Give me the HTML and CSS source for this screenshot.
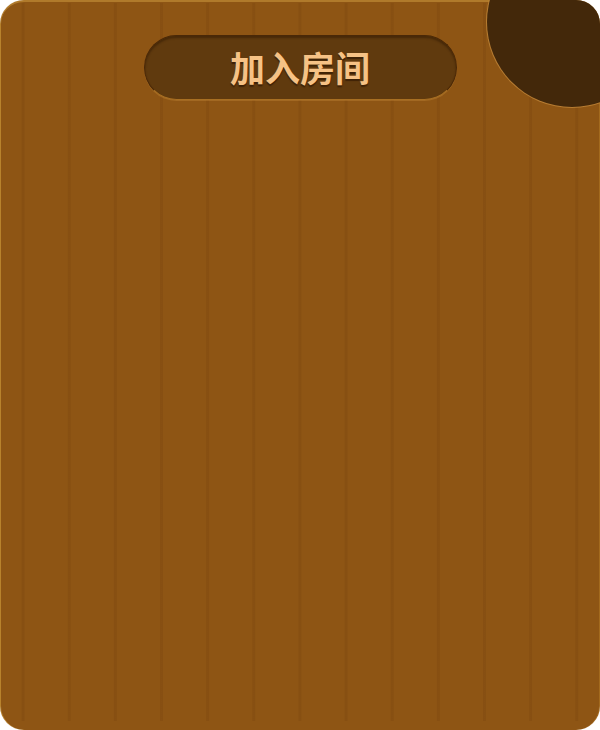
FILE: index.html
```html
<!DOCTYPE html>
<html lang="zh">
<head>
<meta charset="utf-8">
<title>加入房间</title>
<link rel="stylesheet" href="styles.css">
</head>
<body>
<div class="card">
  <div class="corner"></div>
  <div class="title-pill"><span class="title-text">加入房间</span></div>
</div>
</body>
</html>
```
FILE: styles.css
```css
html, body {
  margin: 0;
  padding: 0;
  background: #ffffff;
}
.card {
  position: relative;
  box-sizing: border-box;
  width: 600px;
  height: 730px;
  border-radius: 24px;
  overflow: hidden;
  background-color: #8e5514;
  background-image: linear-gradient(to right,
      transparent calc(50% - 1px),
      rgba(110, 60, 10, 0.22) calc(50% - 1px),
      rgba(110, 60, 10, 0.22) calc(50% + 1px),
      transparent calc(50% + 1px));
  background-size: calc(100% / 13) 718px;
  background-position: 0 3px;
  background-repeat: repeat-x;
  box-shadow: inset 0 2px 0 #b07a2b, inset 1px 0 0 #b8822c, inset -1px 0 0 #a36a1e;
  display: flex;
  flex-direction: column;
  align-items: center;
  padding-top: 35px;
  font-family: "Noto Sans CJK SC", "Noto Sans", sans-serif;
}
.corner {
  position: absolute;
  top: -63px;
  right: -57px;
  width: 170px;
  height: 170px;
  border-radius: 50%;
  background: #43280a;
  box-shadow: 0 0 0 1px rgba(196, 138, 60, 0.75);
}
.title-pill {
  box-sizing: border-box;
  width: 313px;
  height: 65px;
  border-radius: 33px;
  background: #603a0e;
  border: 1px solid #4a2807;
  border-bottom-color: #a86f22;
  box-shadow: inset 0 2px 2px rgba(40, 20, 0, 0.45), 0 1px 0 rgba(200, 140, 60, 0.35);
  display: flex;
  align-items: center;
  justify-content: center;
}
.title-text {
  color: #f6c285;
  font-size: 35px;
  font-weight: 700;
  letter-spacing: 0;
  line-height: 1;
  text-shadow: 0 2px 1px rgba(40, 18, 0, 0.6);
  margin-top: -2px;
}
```
